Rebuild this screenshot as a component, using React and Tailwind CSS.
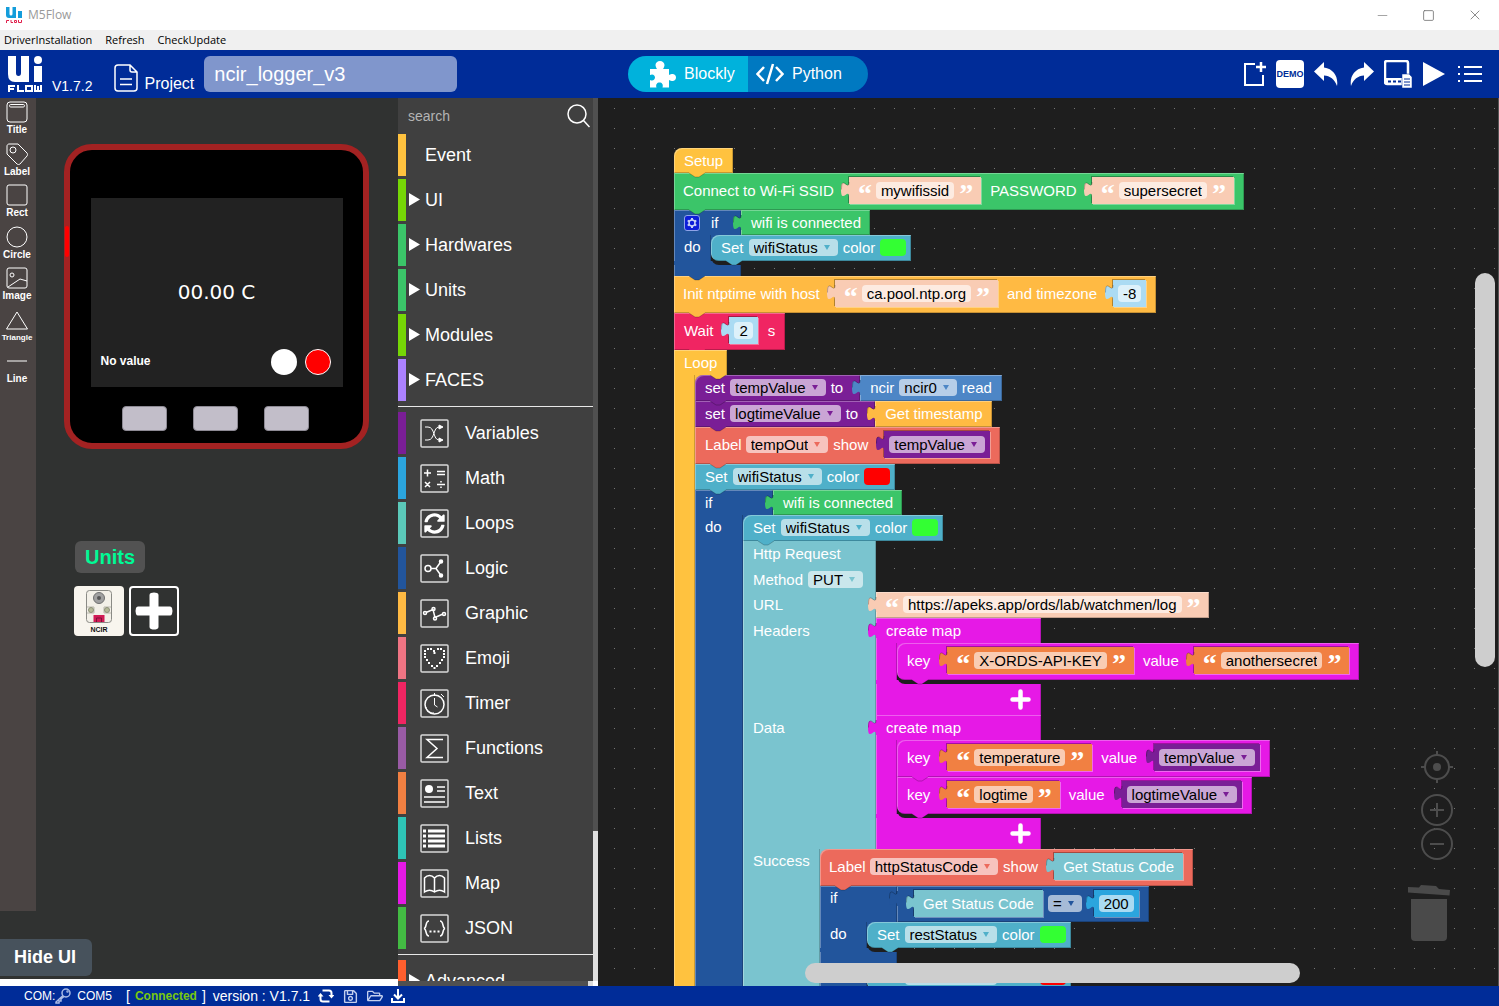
import React from "react";
import { Minus, Square, X, Key } from "lucide-react";
import { FaRegSave, FaRegFolderOpen, FaSyncAlt } from "react-icons/fa";

/* ---------- block palette ---------- */
const TONES = {
  event: { bg: "bg-[#ffc23f]", fg: "text-[#ffc23f]" },
  time: { bg: "bg-[#ffba43]", fg: "text-[#ffba43]" },
  wifi: { bg: "bg-[#3bc569]", fg: "text-[#3bc569]" },
  logic: { bg: "bg-[#22559c]", fg: "text-[#22559c]" },
  shape: { bg: "bg-[#4fb0c9]", fg: "text-[#4fb0c9]" },
  peach: { bg: "bg-[#f9ccb4]", fg: "text-[#f9ccb4]" },
  sky: { bg: "bg-[#abdbf3]", fg: "text-[#abdbf3]" },
  wait: { bg: "bg-[#f02562]", fg: "text-[#f02562]" },
  variable: { bg: "bg-[#7a1e96]", fg: "text-[#7a1e96]" },
  unit: { bg: "bg-[#4d86c6]", fg: "text-[#4d86c6]" },
  label: { bg: "bg-[#ec6a5c]", fg: "text-[#ec6a5c]" },
  http: { bg: "bg-[#7ac4cf]", fg: "text-[#7ac4cf]" },
  map: { bg: "bg-[#e619e6]", fg: "text-[#e619e6]" },
  text: { bg: "bg-[#f18042]", fg: "text-[#f18042]" },
  math: { bg: "bg-[#2ba5de]", fg: "text-[#2ba5de]" },
};

const EDGE_ALL =
  "shadow-[inset_1px_1px_0_rgba(255,255,255,0.3),inset_-1px_-1px_0_rgba(0,0,0,0.22)]";
const EDGE_TOP =
  "shadow-[inset_1px_1px_0_rgba(255,255,255,0.3),inset_-1px_0_0_rgba(0,0,0,0.2)]";
const EDGE_SIDE =
  "shadow-[inset_1px_0_0_rgba(255,255,255,0.3),inset_-1px_0_0_rgba(0,0,0,0.2)]";
const EDGE_HOLE =
  "shadow-[-1px_-1px_0_rgba(0,0,0,0.3),1px_1px_0_rgba(255,255,255,0.35)]";

function Notch({ tone, left = "left-[15px]" }) {
  return (
    <svg
      className={`absolute top-full z-10 -mt-px h-[6px] w-[16px] ${left} ${TONES[tone].fg}`}
      viewBox="0 0 16 6"
      aria-hidden="true"
    >
      <path d="M0 0v1l6 4h4l6-4V0z" fill="currentColor" />
      <path d="M0 1l6 4h4l6-4" fill="none" stroke="#000" strokeOpacity="0.22" />
    </svg>
  );
}

function Tab({ tone }) {
  return (
    <svg
      className={`absolute -left-[8px] top-[5px] h-[15px] w-[9px] ${TONES[tone].fg}`}
      viewBox="0 0 9 15"
      aria-hidden="true"
    >
      <path d="M9 0H8c0 10-8-8-8 7.500s8-2.500 8 7.500h1z" fill="currentColor" />
      <path d="M8 0c0 10-7.500-8-7.500 7.500" fill="none" stroke="#000" strokeOpacity="0.25" />
    </svg>
  );
}

function Pick({ value, tone, name }) {
  return (
    <span className={`relative flex h-[17px] items-center ${TONES[tone].fg}`}>
      <select
        aria-label={name}
        className="field-sizing-content h-[17px] appearance-none rounded-[4px] bg-white/60 pl-[5px] pr-[20px] leading-[17px] text-black outline-none"
      >
        <option>{value}</option>
      </select>
      <svg className="pointer-events-none absolute right-[8px] h-[5px] w-[6px]" viewBox="0 0 6 5">
        <path d="M0 0h6L3 5z" fill="currentColor" />
      </svg>
    </span>
  );
}

function Entry({ value, name }) {
  return (
    <input
      aria-label={name}
      defaultValue={value}
      className="field-sizing-content h-[17px] rounded-[4px] bg-white/60 px-[5px] leading-[17px] text-black outline-none"
    />
  );
}

function Swatch({ color }) {
  return <button aria-label="color" className={`h-[17px] w-[26px] rounded-[4px] ${color}`} />;
}

/* A value block: `inline` sits in a hole of its parent, otherwise it is plugged on the right side. */
function Value({ tone, inline, pad = "px-[5px]", className = "", children }) {
  return (
    <div
      className={`relative flex shrink-0 items-center gap-[5px] pb-px ${TONES[tone].bg} ${pad} ${
        inline ? `h-[27px] ${EDGE_HOLE}` : EDGE_ALL
      } ${className}`}
    >
      <Tab tone={tone} />
      {children}
    </div>
  );
}

function QuoteMark({ children }) {
  return (
    <span className="h-[15px] w-[13px] font-['Liberation_Serif'] text-[28px] leading-[21px] font-bold">{children}</span>
  );
}

function Quoted({ tone, value, name, inline = true, className = "ml-[15px]" }) {
  return (
    <Value tone={tone} inline={inline} pad="px-[9px]" className={className}>
      <QuoteMark>“</QuoteMark>
      <Entry value={value} name={name} />
      <QuoteMark>”</QuoteMark>
    </Value>
  );
}

/* A one-row statement block. */
function Statement({ tone, tall, pad = "pl-[10px] pr-[5px]", round = "", gap = "gap-[5px]", children, plug }) {
  return (
    <div className={`relative flex w-max ${tall ? "h-[37px]" : "h-[26px]"}`}>
      <div className={`flex items-center ${gap} ${pad} pb-[2px] ${round} ${TONES[tone].bg} ${EDGE_ALL}`}>{children}</div>
      {plug}
      <Notch tone={tone} />
    </div>
  );
}

function SetColor({ name, color, round }) {
  return (
    <Statement tone="shape" round={round}>
      <span>Set</span>
      <Pick value={name} tone="shape" name="shape" />
      <span>color</span>
      <Swatch color={color} />
    </Statement>
  );
}

/* The mouth of a C-shaped block: an arm on the left and a column of blocks. */
function Mouth({ tone, arm, label, children }) {
  return (
    <div className="flex">
      <div className={`relative shrink-0 pl-[10px] ${arm} ${TONES[tone].bg} ${EDGE_SIDE}`}>
        {label && <div className="flex h-[23px] items-center">{label}</div>}
      </div>
      <div className="relative">
        <span className={`absolute left-0 top-0 size-2 ${TONES[tone].bg}`} />
        <div className="relative">{children}</div>
      </div>
    </div>
  );
}

/* The gap under the last block of a mouth, then the closing bar. */
function Foot({ tone, arm, width, bar, notch, children }) {
  return (
    <>
      <div className={`flex h-1 ${width} ${TONES[tone].bg}`}>
        <div className={`shrink-0 ${arm}`} />
        <div className="-mt-1 h-2 flex-1 rounded-bl-lg bg-[#1e1e1e]" />
      </div>
      <div className={`relative flex items-center justify-end ${width} ${bar} ${TONES[tone].bg} ${EDGE_SIDE}`}>
        {children}
        {notch && <Notch tone={tone} />}
      </div>
    </>
  );
}

function KeyRow({ round, children }) {
  return (
    <Statement tone="map" tall round={round} gap="" pad="pl-[10px] pr-[10px]">
      {children}
    </Statement>
  );
}

function MapBlock({ children }) {
  return (
    <div className="relative w-max">
      <Tab tone="map" />
      <div className={`flex h-[25px] w-[165px] items-center pl-[10px] ${TONES.map.bg} ${EDGE_TOP}`}>create map</div>
      <Mouth tone="map" arm="w-[21px]">
        {children}
      </Mouth>
      <Foot tone="map" arm="w-[21px]" width="w-[165px]" bar="h-[31px]">
        <button aria-label="Add entry" className="mr-[10px]">
          <svg className="size-[21px]" viewBox="0 0 21 21">
            <path d="M10.500 2.500v16M2.500 10.500h16" stroke="#fff" strokeWidth="4.500" strokeLinecap="round" />
          </svg>
        </button>
      </Foot>
    </div>
  );
}

function HttpLabel({ h = "", children }) {
  return (
    <div className={`w-[133px] shrink-0 pl-[10px] ${TONES.http.bg} ${EDGE_SIDE} ${h}`}>
      <div className="flex h-[24px] items-center gap-[5px]">{children}</div>
    </div>
  );
}

function HttpBlock() {
  return (
    <div>
      <HttpLabel h="h-[26px]">Http Request</HttpLabel>
      <HttpLabel h="h-[25px]">
        Method <Pick value="PUT" tone="http" name="method" />
      </HttpLabel>
      <div className="flex h-[26px]">
        <HttpLabel>URL</HttpLabel>
        <Quoted tone="peach" value="https://apeks.app/ords/lab/watchmen/log" name="url" inline={false} className="" />
      </div>
      <div className="flex">
        <HttpLabel>Headers</HttpLabel>
        <MapBlock>
          <KeyRow round="rounded-l-lg">
            <span>key</span>
            <Quoted tone="text" value="X-ORDS-API-KEY" name="key" className="ml-[17px]" />
            <span className="ml-[9px]">value</span>
            <Quoted tone="text" value="anothersecret" name="value" />
          </KeyRow>
        </MapBlock>
      </div>
      <div className="flex">
        <HttpLabel>Data</HttpLabel>
        <MapBlock>
          <KeyRow round="rounded-tl-lg">
            <span>key</span>
            <Quoted tone="text" value="temperature" name="key" className="ml-[17px]" />
            <span className="ml-[9px]">value</span>
            <Value tone="variable" inline className="ml-[17px]">
              <Pick value="tempValue" tone="variable" name="variable" />
            </Value>
          </KeyRow>
          <KeyRow round="rounded-bl-lg">
            <span>key</span>
            <Quoted tone="text" value="logtime" name="key" className="ml-[17px]" />
            <span className="ml-[9px]">value</span>
            <Value tone="variable" inline className="ml-[17px]">
              <Pick value="logtimeValue" tone="variable" name="variable" />
            </Value>
          </KeyRow>
        </MapBlock>
      </div>
      <Mouth tone="http" arm="w-[77px]" label="Success">
        <Statement tone="label" tall round="rounded-tl-lg" gap="" pad="pl-[9px] pr-[10px]">
          <span className="mr-[4px]">Label</span>
          <Pick value="httpStatusCode" tone="label" name="label" />
          <span className="ml-[5px]">show</span>
          <Value tone="http" inline pad="px-[9px]" className="ml-[16px]">
            Get Status Code
          </Value>
        </Statement>
        <div className="flex h-[36px]">
          <div className={`w-[77px] pl-[10px] leading-[24px] ${TONES.logic.bg} ${EDGE_TOP}`}>if</div>
          <Value tone="logic" pad="pl-[17px] pr-[10px]">
            <Value tone="http" inline pad="px-[9px]">
              Get Status Code
            </Value>
            <Pick value="=" tone="logic" name="operator" />
            <Value tone="math" inline className="ml-[7px]">
              <Entry value="200" name="number" />
            </Value>
          </Value>
        </div>
        <Mouth tone="logic" arm="w-[47px]" label="do">
          <SetColor name="restStatus" color="bg-[#33ff33]" round="rounded-l-lg" />
        </Mouth>
        <Foot tone="logic" arm="w-[47px]" width="w-[77px]" bar="h-[12px]" />
        <Mouth tone="logic" arm="w-[47px]">
          <SetColor name="restStatus" color="bg-[#ff0000]" round="rounded-l-lg" />
        </Mouth>
        <Foot tone="logic" arm="w-[47px]" width="w-[77px]" bar="h-[12px]" />
      </Mouth>
    </div>
  );
}

function Program() {
  return (
    <div className="absolute left-[76px] top-[50px] w-max text-[15px] leading-[17px] whitespace-nowrap text-white">
      <div className={`relative flex h-[25px] w-max items-center rounded-tl-lg px-[10px] ${TONES.event.bg} ${EDGE_ALL}`}>
        Setup
        <Notch tone="event" />
      </div>
      <Statement tone="wifi" tall gap="" pad="pl-[9px] pr-[10px]">
        <span>Connect to Wi-Fi SSID</span>
        <Quoted tone="peach" value="mywifissid" name="ssid" />
        <span className="ml-[9px]">PASSWORD</span>
        <Quoted tone="peach" value="supersecret" name="password" />
      </Statement>
      <div className="flex h-[25px]">
        <div className={`flex w-[67px] items-center gap-[11px] pl-[10px] ${TONES.logic.bg} ${EDGE_TOP}`}>
          <button aria-label="Block settings" className="flex size-4 items-center justify-center rounded-[3px] border border-[#8fa4e8] bg-[#0d1ed8]">
            <svg className="size-3" viewBox="0 0 12 12" fill="none" stroke="#c9d3f5">
              <circle cx="6" cy="6" r="3" strokeWidth="1.500" />
              <path d="M6 1v2M6 9v2M1.700 3.500l1.700 1M8.600 7.500l1.700 1M1.700 8.500l1.700-1M8.600 4.500l1.700-1" strokeWidth="2" />
            </svg>
          </button>
          if
        </div>
        <Value tone="wifi" pad="pl-[10px] pr-[9px]">wifi is connected</Value>
      </div>
      <Mouth tone="logic" arm="w-[37px]" label="do">
        <SetColor name="wifiStatus" color="bg-[#33ff33]" round="rounded-l-lg" />
      </Mouth>
      <Foot tone="logic" arm="w-[37px]" width="w-[67px]" bar="h-[11px]" notch />
      <Statement tone="time" tall gap="" pad="pl-[9px] pr-[10px]">
        <span>Init ntptime with host</span>
        <Quoted tone="peach" value="ca.pool.ntp.org" name="host" />
        <span className="ml-[9px]">and timezone</span>
        <Value tone="sky" inline className="ml-[16px]">
          <Entry value="-8" name="timezone" />
        </Value>
      </Statement>
      <Statement tone="wait" tall gap="" pad="pl-[10px] pr-[10px]">
        <span>Wait</span>
        <Value tone="sky" inline className="ml-[16px]">
          <Entry value="2" name="seconds" />
        </Value>
        <span className="ml-[10px]">s</span>
      </Statement>
      <div className={`relative z-10 flex h-[25px] w-[53px] items-center pl-[10px] ${TONES.event.bg} ${EDGE_TOP}`}>
        Loop
        <Notch tone="event" left="left-[36px]" />
      </div>
      <Mouth tone="event" arm="w-[21px]">
        <Statement
          tone="variable"
          round="rounded-tl-lg"
          pad="pl-[10px] pr-[17px]"
          plug={
            <Value tone="unit" pad="px-[10px]">
              ncir <Pick value="ncir0" tone="unit" name="unit" /> read
            </Value>
          }
        >
          set <Pick value="tempValue" tone="variable" name="variable" /> to
        </Statement>
        <Statement
          tone="variable"
          pad="pl-[10px] pr-[17px]"
          plug={<Value tone="time" pad="pl-[10px] pr-[9px]">Get timestamp</Value>}
        >
          set <Pick value="logtimeValue" tone="variable" name="variable" /> to
        </Statement>
        <Statement tone="label" tall gap="" pad="pl-[10px] pr-[10px]">
          <span className="mr-[4px]">Label</span>
          <Pick value="tempOut" tone="label" name="label" />
          <span className="ml-[5px]">show</span>
          <Value tone="variable" inline className="ml-[16px]">
            <Pick value="tempValue" tone="variable" name="variable" />
          </Value>
        </Statement>
        <SetColor name="wifiStatus" color="bg-[#ff0000]" />
        <div className="flex h-[25px]">
          <div className={`flex w-[78px] items-center pl-[10px] ${TONES.logic.bg} ${EDGE_TOP}`}>if</div>
          <Value tone="wifi" pad="pl-[10px] pr-[9px]">wifi is connected</Value>
        </div>
        <Mouth tone="logic" arm="w-[48px]" label="do">
          <SetColor name="wifiStatus" color="bg-[#33ff33]" round="rounded-tl-lg" />
          <HttpBlock />
        </Mouth>
      </Mouth>
    </div>
  );
}

/* ---------- toolbox ---------- */
const S = { fill: "none", stroke: "#fff", strokeWidth: 1 };

const HEART = [
  [6, 3], [9, 3], [16, 3], [19, 3], [3, 5], [12, 5], [3, 8], [22, 5], [22, 8], [12.500, 7],
  [3, 11], [22, 11], [5, 14], [20, 14], [7, 17], [18, 17], [10, 20], [15, 20], [12.500, 22],
];

const ICONS = {
  Variables: (
    <g {...S}>
      <path d="M5 8h3c7 0 5 13 11 13h3M5 21h3c7 0 5-13 11-13h3" />
      <path d="M19 6l4 2-4 2zM19 19l4 2-4 2z" fill="#fff" />
    </g>
  ),
  Math: (
    <g {...S}>
      <path d="M4 9h7M7.500 5.500v7M17 7.500h8M17 10.500h8M5 18l5 5M10 18l-5 5M17 20.500h8M21 17v1.500M21 22.500V24" strokeWidth="1.500" />
    </g>
  ),
  Loops: <FaSyncAlt x="4" y="4" size={21} color="#fff" />,
  Logic: (
    <g {...S} strokeWidth="1.500">
      <circle cx="8" cy="14.500" r="3" />
      <path d="M11 14.500h5l5-7M16 14.500l5 7" />
      <circle cx="21" cy="7.500" r="1.500" fill="#fff" />
      <circle cx="21" cy="21.500" r="1.500" fill="#fff" />
    </g>
  ),
  Graphic: (
    <g {...S} strokeWidth="1.500">
      <path d="M6 13.500l7-3 2 8 8-3.500" />
      <circle cx="5" cy="14" r="1.500" />
      <circle cx="13.500" cy="10" r="1.500" />
      <circle cx="15" cy="19.500" r="1.500" />
      <circle cx="24" cy="15" r="1.500" />
    </g>
  ),
  Emoji: (
    <g fill="#fff">
      {HEART.map(([x, y]) => (
        <rect key={`${x}-${y}`} x={x + 1} y={y + 1} width="2" height="2" />
      ))}
    </g>
  ),
  Timer: (
    <g {...S}>
      <circle cx="14.500" cy="15.500" r="9.500" strokeWidth="1.500" />
      <path d="M14.500 9v7l3 2M14.500 4v3M21 5l3 3M6 18c1 4 4 6 8 6" />
    </g>
  ),
  Functions: <path {...S} strokeWidth="1.500" d="M23 5.500H7l10 9-10 9h16" />,
  Text: (
    <g {...S} strokeWidth="1.500">
      <circle cx="9" cy="10" r="4" fill="#fff" stroke="none" />
      <path d="M17 8h8M17 12h8M4 18h21M4 23h21" />
    </g>
  ),
  Lists: (
    <g {...S} strokeWidth="3">
      <path d="M3 7h3M3 12h3M3 17h3M3 22h3M8 7h17M8 12h17M8 17h17M8 22h17" />
    </g>
  ),
  Map: (
    <path
      {...S}
      strokeWidth="1.500"
      d="M14.500 9c-3-3.500-7-3.500-10 0v14c3-2 7-2 10 0 3-2 7-2 10 0V9c-3-3.500-7-3.500-10 0zM14.500 9v14"
    />
  ),
  JSON: (
    <g {...S} strokeWidth="1.500">
      <path d="M9 7c-4 0-2 7-5 7.500 3 .5 1 7.500 5 7.500M20 7c4 0 2 7 5 7.500-3 .5-1 7.500-5 7.500" />
      <path d="M9.500 17.500h2M13.500 17.500h2M17.500 17.500h2" strokeWidth="2" />
    </g>
  ),
};

const GROUPS = [
  ["Event", "bg-[#ffc23f]", false],
  ["UI", "bg-[#76d606]", true],
  ["Hardwares", "bg-[#3bc569]", true],
  ["Units", "bg-[#3bc569]", true],
  ["Modules", "bg-[#76d606]", true],
  ["FACES", "bg-[#ac82ff]", true],
];

const BASICS = [
  ["Variables", "bg-[#7a1e96]"],
  ["Math", "bg-[#2ba5de]"],
  ["Loops", "bg-[#5bc9b9]"],
  ["Logic", "bg-[#22559c]"],
  ["Graphic", "bg-[#ffba43]"],
  ["Emoji", "bg-[#ef7483]"],
  ["Timer", "bg-[#f02562]"],
  ["Functions", "bg-[#995ba5]"],
  ["Text", "bg-[#f18042]"],
  ["Lists", "bg-[#2ec4b6]"],
  ["Map", "bg-[#e619e6]"],
  ["JSON", "bg-[#43bb43]"],
];

function Group({ name, color, arrow }) {
  return (
    <button className="flex h-[42px] w-full shrink-0 items-center">
      <span className={`h-full w-2 ${color}`} />
      <span className="flex w-[19px] pb-[2px] pl-[3px]">
        {arrow && (
          <svg className="h-[13px] w-[11px]" viewBox="0 0 11 13">
            <path d="M0 0l11 6.500L0 13z" fill="#fff" />
          </svg>
        )}
      </span>
      {name}
    </button>
  );
}

function Toolbox() {
  return (
    <aside className="flex w-[200px] shrink-0 bg-[#404040] text-[18px] leading-[22px] text-white">
      <div className="flex min-w-0 flex-1 flex-col">
        <div className="flex h-[36px] shrink-0 items-center pr-[3px]">
          <input
            aria-label="search"
            placeholder="search"
            className="w-0 flex-1 bg-transparent pl-[10px] text-[14px] outline-none placeholder:text-[#b4b4b4]"
          />
          <button aria-label="Search">
            <svg className="size-6" viewBox="0 0 24 24" {...S} strokeWidth="1.500">
              <circle cx="11" cy="10" r="9" />
              <path d="M17.500 16.500l6 6.500" />
            </svg>
          </button>
        </div>
        <div className="flex min-h-0 flex-1 flex-col gap-[3px] overflow-hidden">
          {GROUPS.map(([n, c, a]) => (
            <Group key={n} name={n} color={c} arrow={a} />
          ))}
          <div className="my-[2px] h-px shrink-0 bg-[#e8e8e8]" />
          {BASICS.map(([n, c]) => (
            <button key={n} className="flex h-[42px] shrink-0 items-center">
              <span className={`h-full w-2 ${c}`} />
              <svg className="ml-[14px] size-[29px]" viewBox="0 0 29 29">
                <rect x="1" y="1" width="27" height="27" rx="1" fill="none" stroke="#d8d8d8" strokeWidth="1.500" />
                {ICONS[n]}
              </svg>
              <span className="ml-4">{n}</span>
            </button>
          ))}
          <div className="my-[2px] h-px shrink-0 bg-[#e8e8e8]" />
          <Group name="Advanced" color="bg-[#ff5f2e]" arrow />
        </div>
        <div className="flex h-[5px] justify-end bg-[#505050]">
          <span className="w-[5px] bg-[#dcdcdc]" />
        </div>
      </div>
      <div className="flex w-[5px] flex-col justify-end bg-[#505050]">
        <span className="mb-[5px] h-[150px] bg-[#dfdfdf]" />
        <span className="-mt-[5px] h-[5px] bg-white" />
      </div>
    </aside>
  );
}

/* ---------- designer ---------- */
const SHAPES = [
  ["Title", <g key="t"><rect x="1" y="1" width="20" height="20" rx="3" /><rect x="3.500" y="3.500" width="15" height="2.500" rx="1.200" /></g>],
  ["Label", <g key="l"><path d="M1 3c0-1 1-2 2-2h9l9 9c.7 1 .7 2 0 3l-7 8c-1 .7-2 .7-3 0L1 11z" /><circle cx="7" cy="7" r="3" /></g>],
  ["Rect", <rect key="r" x="1" y="1" width="20" height="20" rx="2" />],
  ["Circle", <circle key="c" cx="11" cy="11" r="10" />],
  ["Image", <g key="i"><rect x="1" y="1" width="20" height="20" rx="2" /><circle cx="6" cy="8" r="2" /><path d="M2 20l12-8 7 2" /></g>],
  ["Triangle", <path key="a" d="M11 3L0.500 20h21z" />],
  ["Line", <path key="n" d="M1 11h20" />],
];

function Designer() {
  return (
    <section className="flex w-[398px] shrink-0 flex-col bg-[#303231] text-white">
      <div className="flex min-h-0 flex-1">
        <nav className="w-[36px] bg-[#4a4443]">
          <div className="grid h-[291px] grid-rows-7 pr-[2px]">
            {SHAPES.map(([name, icon]) => (
              <button key={name} className="flex flex-col items-center pt-[3px]">
                <svg className="size-[22px]" viewBox="0 0 22 22" {...S}>
                  {icon}
                </svg>
                <span className={`mt-px leading-[12px] font-bold ${name === "Triangle" ? "text-[8px]" : "text-[10px]"}`}>
                  {name}
                </span>
              </button>
            ))}
          </div>
        </nav>
        <div className="flex-1 pt-[46px] pl-[28px]">
          <div className="relative flex size-[305px] flex-col items-center rounded-[28px] border-6 border-[#a32222] bg-black">
            <span className="absolute -left-[5px] top-[76px] h-[31px] w-1 rounded-sm bg-[#ff0000]" />
            <div className="mt-[48px] flex h-[189px] w-[252px] flex-col bg-[#222222]">
              <div className="mt-[80px] text-center font-['DejaVu_Sans'] text-[20px] leading-[28px]">00.00 C</div>
              <div className="mt-[43px] flex items-center gap-2 pr-[12px] pl-[10px]">
                <span className="mb-[3px] flex-1 text-[12px] leading-4 font-bold">No value</span>
                <span className="size-[26px] rounded-full bg-white" />
                <span className="size-[26px] rounded-full border border-white bg-[#ff0000]" />
              </div>
            </div>
            <div className="mt-[19px] mr-[3px] flex gap-[26px]">
              <button aria-label="Button A" className="h-[25px] w-[45px] rounded-[4px] border border-[#8d8a94] bg-[#c2bec9]" />
              <button aria-label="Button B" className="h-[25px] w-[45px] rounded-[4px] border border-[#8d8a94] bg-[#c2bec9]" />
              <button aria-label="Button C" className="h-[25px] w-[45px] rounded-[4px] border border-[#8d8a94] bg-[#c2bec9]" />
            </div>
          </div>
          <h2 className="mt-[92px] ml-[11px] h-8 w-[70px] rounded-md bg-[#525252] text-center text-[20px] leading-8 font-bold text-[#00fa96]">
            Units
          </h2>
          <div className="mt-[13px] ml-[10px] flex gap-[5px]">
            <button aria-label="NCIR unit" className="size-[50px]">
              <svg className="size-[50px]" viewBox="0 0 50 50">
                <rect width="50" height="50" rx="4" fill="#f8f5ee" />
                <rect x="12.500" y="4.500" width="25" height="32" rx="3" fill="#f3f0e8" stroke="#8b8b86" />
                <circle cx="25" cy="12" r="5.500" fill="#a0a0a0" stroke="#707070" />
                <circle cx="25" cy="12" r="2" fill="#555" />
                <path d="M13 21h7v6h-7M37 21h-7v6h7" fill="none" stroke="#b9b7ac" />
                <circle cx="17" cy="24" r="2.500" fill="#b5b998" stroke="#8c9078" />
                <circle cx="33" cy="24" r="2.500" fill="#b5b998" stroke="#8c9078" />
                <path d="M19.500 29h11v7h-11z" fill="#d11a55" />
                <path d="M22.500 36v-4h5v4" fill="none" stroke="#7d1238" />
                <text x="25" y="46" textAnchor="middle" fontSize="7" fontWeight="bold" fontFamily="Liberation Sans" fill="#111">
                  NCIR
                </text>
              </svg>
            </button>
            <button aria-label="Add unit" className="flex size-[50px] items-center justify-center rounded-[4px] border-2 border-white">
              <svg className="size-[38px]" viewBox="0 0 38 38" fill="#fff">
                <path d="M16 1q3-1 6 0 1.500.5 1.500 2V14.500H35q1.500 0 2 1.500 1 3 0 6-.5 1.500-2 1.500H23.500V35q0 1.500-1.500 2-3 1-6 0-1.500-.5-1.500-2V23.500H3q-1.500 0-2-1.500-1-3 0-6 .5-1.500 2-1.500h11.500V3q0-1.500 1.500-2z" />
              </svg>
            </button>
          </div>
        </div>
      </div>
      <button className="mt-[28px] mb-[3px] h-[37px] w-[92px] rounded-r-md bg-[#47525c] pr-[2px] text-[18px] leading-[35px] font-bold">
        Hide UI
      </button>
      <div className="h-[7px] bg-white" />
    </section>
  );
}

/* ---------- canvas ---------- */
function Canvas() {
  const c = { fill: "none", stroke: "#4d4d4d", strokeWidth: 2 };
  return (
    <main className="relative min-w-0 flex-1 overflow-hidden border-r border-[#555555] bg-[#1e1e1e] bg-[conic-gradient(from_270deg_at_1px_1px,#777777_90deg,transparent_0deg)] bg-[length:20px_20px] bg-[position:16px_10px]">
      <Program />
      <div className="absolute right-[45px] bottom-[45px] flex flex-col items-center">
        <button aria-label="Center blocks" className="ml-[15px]">
          <svg className="size-8" viewBox="0 0 32 32" {...c}>
            <circle cx="16" cy="16" r="12" />
            <path d="M16 0v4M16 28v4M0 16h4M28 16h4" />
            <circle cx="16" cy="16" r="4" fill="#4d4d4d" stroke="none" />
          </svg>
        </button>
        <button aria-label="Zoom in" className="mt-[11px] ml-[15px]">
          <svg className="size-8" viewBox="0 0 32 32" {...c}>
            <circle cx="16" cy="16" r="15" />
            <path d="M16 9v14M9 16h14" />
          </svg>
        </button>
        <button aria-label="Zoom out" className="mt-[2px] ml-[15px]">
          <svg className="size-8" viewBox="0 0 32 32" {...c}>
            <circle cx="16" cy="16" r="15" />
            <path d="M9 16h14" />
          </svg>
        </button>
        <button aria-label="Delete blocks" className="mt-[25px]">
          <svg className="h-[56px] w-[43px]" viewBox="0 0 43 56" fill="#4a4a4a">
            <path d="M0 2l11 .5 2-2.500 15 1 3 3 11 1-.5 5.500L0 7.500zM3 14h36v38q0 4-4 4H7q-4 0-4-4z" />
          </svg>
        </button>
      </div>
      <div className="absolute top-[175px] right-[3px] z-20 h-[394px] w-5 rounded-full bg-[#cecece]" />
      <div className="absolute bottom-[3px] left-[207px] z-20 h-5 w-[495px] rounded-full bg-[#cecece]" />
    </main>
  );
}

/* ---------- chrome ---------- */
function Header() {
  return (
    <header className="flex h-12 shrink-0 items-center bg-[#002c98] text-[16px] leading-5 text-white">
      <div className="flex w-[628px] shrink-0 items-center">
        <svg className="ml-2 h-[37px] w-[34px]" viewBox="0 0 34 37" aria-label="UiFlow">
          <path d="M0 0h8v17q0 3 2.500 3T13 17V0h8v26H7q-7 0-7-8z" fill="#fff" />
          <circle cx="30" cy="4" r="4" fill="#fff" />
          <rect x="26" y="10" width="8" height="16" fill="#fff" />
          <g fill="none" stroke="#fff" strokeWidth="2">
            <path d="M1 36v-6h6M1 33h5M10 29v6h6M18 30h6v5h-6zM27 29v6h6v-6M30 30v5" />
          </g>
        </svg>
        <span className="mt-6 ml-[10px] text-[14px]">V1.7.2</span>
        <svg className="mt-2 ml-[22px] h-7 w-6" viewBox="0 0 24 28" {...S} strokeWidth="1.500">
          <path d="M4 1h12l7 7v16q0 3-3 3H4q-3 0-3-3V4q0-3 3-3zM16 1v5q0 2 2 2h5M6 15h12M6 20.500h12" />
        </svg>
        <label htmlFor="project" className="mt-5 ml-[6px]">
          Project
        </label>
        <input
          id="project"
          defaultValue="ncir_logger_v3"
          className="ml-[10px] h-9 w-[253px] rounded-md bg-white/50 px-[10px] text-[20px] outline-none"
        />
      </div>
      <div className="flex h-9 shrink-0 overflow-hidden rounded-full">
        <button className="flex w-[120px] items-center bg-[#00b2dc] pl-[21px]">
          <svg className="size-[27px]" viewBox="0 0 27 27" fill="#fff">
            <path d="M1 8h7C7 6.500 6.500 5 6.500 4 6.500 2 8.500 0 11 0s4.500 2 4.500 4c0 1-.5 2.500-1.500 4h6v6c1.500-1 2.500-1 3.500-1 2 0 3.500 1.500 3.500 3.500S25.500 20 23.500 20c-1 0-2-.2-3.500-1v7.500h-6.500c1-3-.5-5-3-5s-4 2-3 5H1V19c3 1.500 5-.5 5-2.500s-2-4-5-2.500z" />
          </svg>
          <span className="ml-2">Blockly</span>
        </button>
        <button className="flex w-[120px] items-center bg-[#0079c1] pl-2">
          <svg className="h-[22px] w-7" viewBox="0 0 28 22" {...S} strokeWidth="2.500">
            <path d="M8 4L1.500 11 8 18M20 4l6.500 7L20 18M17 1l-6 20" />
          </svg>
          <span className="ml-2">Python</span>
        </button>
      </div>
      <div className="ml-auto flex items-center pr-[17px]">
        <button aria-label="New">
          <svg className="h-[26px] w-6" viewBox="0 0 24 26" {...S} strokeWidth="2">
            <path d="M12 3H2v21h18V14" />
            <path d="M18 1v10M13 6h10" strokeWidth="2.500" />
          </svg>
        </button>
        <button className="ml-[9px] h-7 w-7 rounded-[4px] bg-white text-center text-[9px] leading-7 font-bold text-[#002c98]">
          DEMO
        </button>
        <button aria-label="Undo" className="ml-[10px]">
          <svg className="h-6 w-6" viewBox="0 0 24 24" fill="#fff">
            <path d="M0 9.500L10 0v5.500C20 7 24.500 15 23 24 20.500 17 16 14 10 13.500V19z" />
          </svg>
        </button>
        <button aria-label="Redo" className="ml-3">
          <svg className="h-6 w-6" viewBox="0 0 24 24" fill="#fff">
            <path d="M24 9.500L14 0v5.500C4 7-.5 15 1 24 3.500 17 8 14 14 13.500V19z" />
          </svg>
        </button>
        <button aria-label="Upload to device" className="ml-[10px]">
          <svg className="h-7 w-7" viewBox="0 0 28 28">
            <rect x="1" y="1" width="23" height="23" rx="2" fill="none" stroke="#fff" strokeWidth="2.500" />
            <path d="M1 18h23v6H1z" fill="#fff" />
            <path d="M4 21.500h3M9 21.500h3M14 21.500h3" stroke="#002c98" strokeWidth="2" />
            <path d="M18 14h7l3 3v11H18z" fill="#fff" stroke="#002c98" strokeWidth=".5" />
            <path d="M20 19h6M20 22h6M20 25h6" stroke="#002c98" />
          </svg>
        </button>
        <button aria-label="Run" className="ml-[11px]">
          <svg className="h-6 w-[22px]" viewBox="0 0 22 24">
            <path d="M0 0l22 12L0 24z" fill="#fff" />
          </svg>
        </button>
        <button aria-label="Menu" className="ml-[13px]">
          <svg className="h-5 w-6" viewBox="0 0 24 20" stroke="#fff" strokeWidth="2">
            <path d="M0 3h2M0 10h2M0 17h2M6 3h18M6 10h18M6 17h18" />
          </svg>
        </button>
      </div>
    </header>
  );
}

export default function App() {
  return (
    <div className="flex h-screen flex-col overflow-hidden bg-white font-['Liberation_Sans',sans-serif]">
      <div className="flex h-[30px] shrink-0 items-center bg-white pl-[6px] font-['Open_Sans',sans-serif] text-[12px] text-[#999999]">
        <svg className="size-4" viewBox="0 0 16 16">
          <path d="M0 0h3.500v7q0 1.500 1.500 1.500T6.500 7V0H10v11H3q-3 0-3-3z" fill="#149ddb" />
          <rect x="12" y="4" width="4" height="7" fill="#149ddb" />
          <path d="M.5 16v-2.500H3M5 13v2.500h2M8.500 13.500h2v2h-2zM12.500 13v2.500h3V13" fill="none" stroke="#e0204c" />
        </svg>
        <span className="ml-[6px]">M5Flow</span>
        <div className="ml-auto flex items-center gap-[32px] pr-[16px] text-[#6f6f6f]">
          <button aria-label="Minimize"><Minus size={15} strokeWidth={1} /></button>
          <button aria-label="Maximize"><Square size={13} strokeWidth={1.5} /></button>
          <button aria-label="Close"><X size={16} strokeWidth={1.2} /></button>
        </div>
      </div>
      <nav className="flex h-5 shrink-0 items-center gap-[13px] bg-[#f0f0f0] pl-1 font-['Open_Sans',sans-serif] text-[11px] text-black">
        <button>DriverInstallation</button>
        <button>Refresh</button>
        <button>CheckUpdate</button>
      </nav>
      <Header />
      <div className="flex min-h-0 flex-1">
        <Designer />
        <Toolbox />
        <Canvas />
      </div>
      <footer className="flex h-5 shrink-0 items-center bg-[#002c98] pl-6 text-[12px] leading-5 text-white">
        <span>COM:</span>
        <svg className="size-4" viewBox="0 0 16 16" fill="none" stroke="#a9bbe6" strokeWidth="1.500">
          <circle cx="11" cy="5" r="4" />
          <path d="M8 7.500L1 14v1h3v-2h2v-2l3-2.500" />
          <circle cx="12.500" cy="3.500" r=".5" />
        </svg>
        <span className="ml-[6px]">COM5</span>
        <span className="ml-[14px] text-[14px]">[</span>
        <span className="ml-[5px] font-bold text-[#79c80e]">Connected</span>
        <span className="ml-[5px] text-[14px]">]</span>
        <span className="ml-[7px] text-[14px]">version : V1.7.1</span>
        <button aria-label="Refresh" className="ml-2">
          <svg className="h-[14px] w-4" viewBox="0 0 16 14" {...S} strokeWidth="2">
            <path d="M4.500 1.500H11q2.500 0 2.500 2.500v3M11.500 12.500H5q-2.500 0-2.500-2.500V7" />
            <path d="M10.500 6h6l-3 3.500zM-.5 7.500h6L2.500 4z" fill="#fff" stroke="none" />
          </svg>
        </button>
        <button aria-label="Save" className="ml-[9px]"><FaRegSave size={15} color="#c3cfee" /></button>
        <button aria-label="Open" className="ml-[9px]"><FaRegFolderOpen size={16} color="#c3cfee" /></button>
        <button aria-label="Download" className="ml-[8px]">
          <svg className="size-[14px]" viewBox="0 0 14 14" {...S} strokeWidth="2">
            <path d="M7 0v9M3 5.500l4 4 4-4M1 9v4h12V9" />
          </svg>
        </button>
      </footer>
    </div>
  );
}
